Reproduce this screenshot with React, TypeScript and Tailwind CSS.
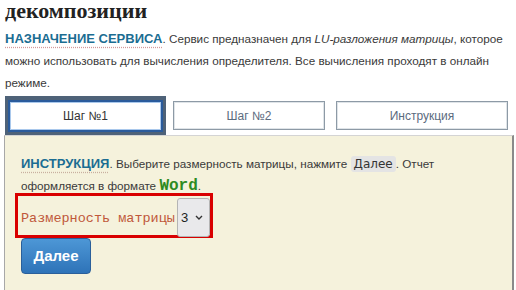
import React from "react";

const TabBox = ({ label, active }: { label: string; active?: boolean }) =>
  active ? (
    <div className="h-[32px] flex items-center justify-center bg-white border-2 border-[#2a5b9c] shadow-[inset_0_0_0_1px_#a9c8ec] text-[12px] text-[#333]">
      {label}
    </div>
  ) : (
    <div className="h-[29px] flex items-center justify-center bg-white border border-[#8d9aa6] shadow-[inset_0_0_0_1px_#dfe4e8] text-[12px] text-[#5b6b7e]">
      {label}
    </div>
  );

const App = () => {
  return (
    <div className="w-[516px] h-[290px] overflow-hidden bg-white font-['Liberation_Sans',Arial,sans-serif] text-[#3a3a3a]">
      <div className="pl-[5px]">
        <h1 className="-mt-[28px] h-[52px] font-['Liberation_Serif','DejaVu_Serif',serif] font-bold text-[22px] leading-[26px] text-[#222] whitespace-nowrap">
          <span className="pl-[70px]">Онлайн калькулятор: LU-разложение матрицы. Метод LU-</span>
          <br />
          декомпозиции
        </h1>

        <p className="mt-[4px] text-[11.7px] leading-[22px] whitespace-nowrap">
          <span className="font-bold text-[13px] text-[#1b6d92] underline decoration-dotted decoration-[#d49a9a] underline-offset-[4px]">
            НАЗНАЧЕНИЕ СЕРВИСА
          </span>
          . Сервис предназначен для <i>LU-разложения матрицы</i>, которое
          <br />
          можно использовать для вычисления определителя. Все вычисления проходят в онлайн
          <br />
          режиме.
        </p>

        <div className="mt-[2px] flex items-start gap-[3px] h-[39px]">
          <div className="w-[161px] h-[39px] bg-[#4e6278] pt-[4px] px-[3px]">
            <TabBox label="Шаг №1" active />
          </div>
          <div className="w-[160px] pt-[5px] px-[4px]">
            <TabBox label="Шаг №2" />
          </div>
          <div className="w-[180px] pt-[5px] px-[4px]">
            <TabBox label="Инструкция" />
          </div>
        </div>

        <div className="-ml-[1px] w-[510px] h-[200px] bg-[#f5f2dc] border-t border-t-[#d4d4d4] border-l border-l-[#a8a8a8] border-r-2 border-r-[#8a8a8a] pt-[17px] pl-[16px]">
          <p className="text-[11.7px] leading-[22px] whitespace-nowrap">
            <span className="font-bold text-[13px] text-[#1b6d92] underline decoration-dotted decoration-[#c9b0a0] underline-offset-[4px]">
              ИНСТРУКЦИЯ
            </span>
            . Выберите размерность матрицы, нажмите{" "}
            <span className="bg-[#e4e4e4] rounded-[3px] px-[3px] py-[1px] font-['DejaVu_Sans',sans-serif] text-[12px] text-[#333]">
              Далее
            </span>
            . Отчет
            <br />
            оформляется в формате{" "}
            <span className="font-['Liberation_Mono',monospace] font-bold text-[16px] leading-none text-[#2e8b22]">
              Word
            </span>
            .
          </p>

          <div className="-mt-[4px] -ml-[6px] w-[198px] h-[45px] border-[3px] border-[#d90000] flex items-start pl-[3px]">
            <span className="mt-[15px] font-['Liberation_Mono',monospace] text-[13.5px] leading-[15px] text-[#c0583a] whitespace-nowrap">
              Размерность матрицы
            </span>
            <div className="ml-[2px] mt-[2px] w-[33px] h-[39px] shrink-0 bg-[#e9e9eb] border border-[#b4b4b4] rounded-[3px] flex items-center justify-between pl-[3px] pr-[6px] text-[13px] text-[#222]">
              <span>3</span>
              <svg width="8" height="5" viewBox="0 0 8 5" fill="none">
                <path d="M1 1l3 3 3-3" stroke="#333" strokeWidth="1.4" />
              </svg>
            </div>
          </div>

          <button className="w-[70px] h-[36px] rounded-[4px] border border-[#2a5f9a] bg-gradient-to-b from-[#4d97d6] to-[#2e73b8] text-white font-bold text-[15px]">
            Далее
          </button>
        </div>
      </div>
    </div>
  );
};

export default App;
